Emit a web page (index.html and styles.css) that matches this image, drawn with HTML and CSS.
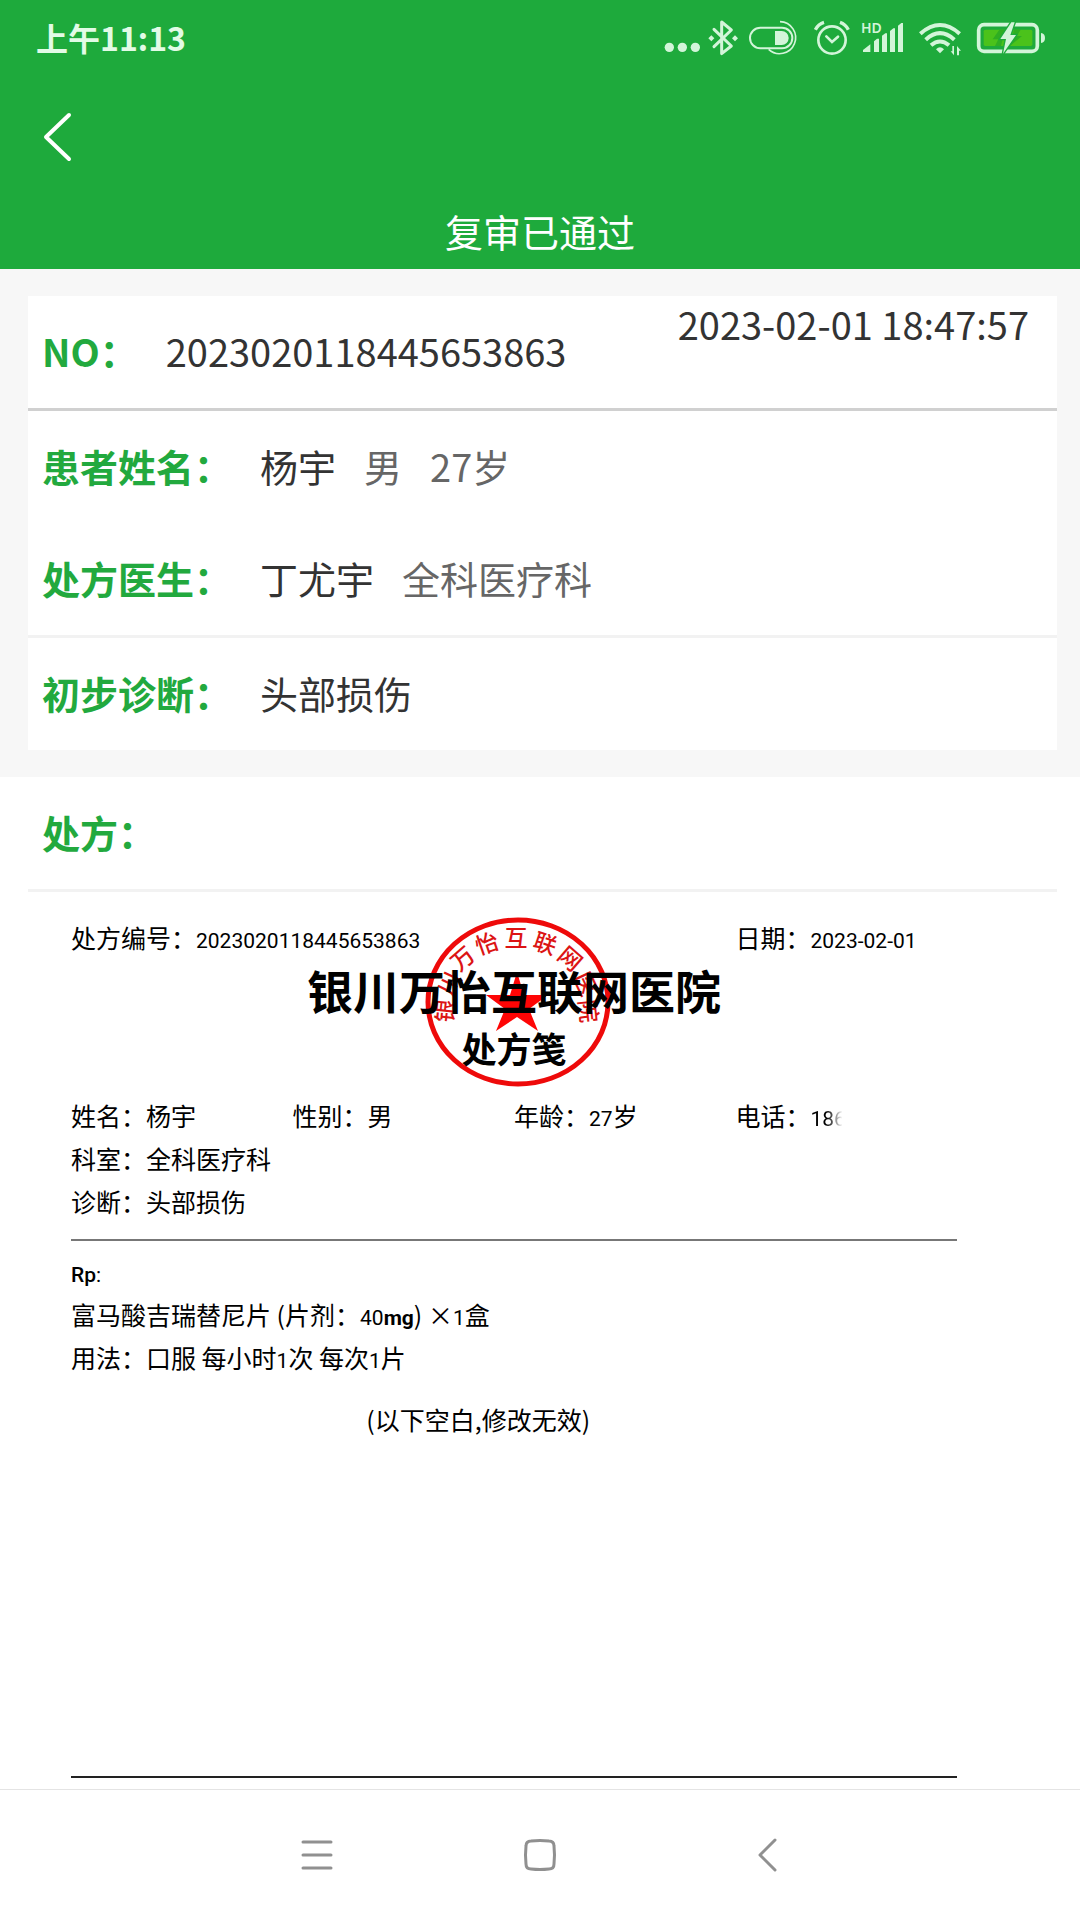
FILE: index.html
```html
<!DOCTYPE html>
<html lang="zh-CN">
<head>
<meta charset="utf-8">
<meta name="viewport" content="width=device-width, initial-scale=1">
<title>复审已通过</title>
<link rel="stylesheet" href="styles.css">
</head>
<body>
<header class="top">
  <div class="status">
    <time class="clock">上午11:13</time>
    <div class="status-icons">
      <svg width="37" height="36" viewBox="72 60 111 108" aria-hidden="true"><g fill="#d3f5d9"><circle cx="88" cy="142" r="14"/><circle cx="127" cy="142" r="14"/><circle cx="166" cy="142" r="14"/></g></svg>
      <svg width="31" height="36" viewBox="204 60 93 108" aria-hidden="true"><path d="M222 88L274 138L245 161V66L274 90L222 140" fill="none" stroke="#d3f5d9" stroke-width="9" stroke-linejoin="round" stroke-linecap="round"/><path d="M214 106l9 9-9 9-9-9zM285 106l9 9-9 9-9-9z" fill="#d3f5d9"/></svg>
      <svg width="53" height="36" viewBox="318 60 159 108" aria-hidden="true"><g fill="none" stroke="#d3f5d9"><rect x="330" y="83" width="127" height="62" rx="31" stroke-width="6"/><path d="M420 65A48 48 0 1 1 386 148" stroke-width="5"/></g><path d="M405 93h20a21 21 0 0 1 0 42h-20z" fill="#d3f5d9"/></svg>
      <svg width="44" height="36" viewBox="498 60 132 108" aria-hidden="true"><g fill="none" stroke="#d3f5d9" stroke-width="8"><circle cx="576" cy="120" r="41"/><path d="M559 109l17 17 18-16" stroke-linecap="round"/><path d="M526 89Q535 72 552 67M600 67Q617 73 625 89" stroke-width="10"/></g></svg>
      <svg width="48" height="36" viewBox="651 60 144 108" aria-hidden="true"><text x="663" y="98" class="hd">HD</text><path d="M669 156v-6l22-17v23zM702 156v-32l9-8h6v40zM726 156v-49l10-7h5v56zM750 156v-63l10-8h5v71zM774 156v-79l10-8h5v87z" fill="#d3f5d9"/></svg>
      <svg width="51" height="36" viewBox="816 60 153 108" aria-hidden="true"><g fill="none" stroke="#d3f5d9" stroke-width="12"><path d="M841 101Q900 49 959 101"/><path d="M857 119Q900 80 943 119"/><path d="M873 136Q900 113 927 136"/></g><path d="M888 148q12-12 24 0l-12 12zM942 138v28l-10-12h5v-16zM951 166v-28l12 14h-6v14z" fill="#d3f5d9"/></svg>
      <svg width="76" height="36" viewBox="990 60 228 108" aria-hidden="true"><rect x="1016" y="74" width="176" height="80" rx="16" fill="none" stroke="#d3f5d9" stroke-width="11"/><path d="M1203 99q12 1 12 15t-12 15z" fill="#d3f5d9"/><rect x="1031" y="89" width="146" height="49" rx="5" fill="#4bc21b"/><path d="M1078 89l-20 29h17l-10 20h18l12-49zM1122 89l-12 49 36-30h-16l12-19z" fill="#2fae22"/><path d="M1114 67l-33 50h17l-9 44 39-56h-17l13-38z" fill="#d3f5d9" stroke="#1eaa3c" stroke-width="8" paint-order="stroke"/></svg>
    </div>
  </div>
  <div class="toolbar">
    <button class="back" type="button" aria-label="返回"><svg width="32" height="52" viewBox="0 0 32 52"><path d="M28 4L5 26L28 48" fill="none" stroke="#fff" stroke-width="4" stroke-linecap="round" stroke-linejoin="round"/></svg></button>
  </div>
  <h1 class="title">复审已通过</h1>
</header>

<main class="main">
  <section class="summary">
    <div class="card">
      <div class="row row-number"><h2 class="label">NO：</h2><span>2023020118445653863</span><time class="stamp">2023-02-01 18:47:57</time></div>
      <div class="row"><h2 class="label">患者姓名：</h2><span>杨宇</span><span class="muted">男</span><span class="muted">27岁</span></div>
      <div class="row"><h2 class="label">处方医生：</h2><span>丁尤宇</span><span class="muted">全科医疗科</span></div>
      <div class="row row-ruled"><h2 class="label">初步诊断：</h2><span>头部损伤</span></div>
    </div>
  </section>

  <section class="prescription">
    <div class="row row-heading"><h2 class="label">处方：</h2></div>
    <article class="sheet">
      <svg class="seal" width="186" height="170" viewBox="0 0 186 170" aria-hidden="true">
        <ellipse cx="93" cy="85" rx="90" ry="82" fill="none" stroke="#ee0a0a" stroke-width="5"/>
        <path d="M92 55L99 78H123L104 92L113 114L92 100L71 114L80 92L61 78H85Z" fill="#fe0505"/>
        <g class="seal-text">
          <text transform="translate(21 94) rotate(-84)" y="8">银</text>
          <text transform="translate(25 67) rotate(-65)" y="8">川</text>
          <text transform="translate(38 42) rotate(-41)" y="8">万</text>
          <text transform="translate(62 27) rotate(-19)" y="8">怡</text>
          <text transform="translate(91 21)" y="8">互</text>
          <text transform="translate(120 27) rotate(19)" y="8">联</text>
          <text transform="translate(145 42) rotate(41)" y="8">网</text>
          <text transform="translate(160 67) rotate(65)" y="8">医</text>
          <text transform="translate(163 94) rotate(84)" y="8">院</text>
        </g>
      </svg>
      <div class="grid"><p class="wide">处方编号：<span class="num">2023020118445653863</span></p><p>日期：<span class="num">2023-02-01</span></p></div>
      <h3 class="hospital">银川万怡互联网医院</h3>
      <h4 class="kind">处方笺</h4>
      <div class="grid"><p>姓名：杨宇</p><p>性别：男</p><p>年龄：<span class="num">27</span>岁</p><p>电话：<span class="num faded">186</span></p></div>
      <p>科室：全科医疗科</p>
      <p>诊断：头部损伤</p>
      <hr class="rule">
      <p><span class="num strong">Rp</span><span class="num">:</span></p>
      <p>富马酸吉瑞替尼片 (片剂：<span class="num">40<b>mg</b></span>) ×<span class="num">1</span>盒</p>
      <p>用法：口服 每小时<span class="num">1</span>次 每次<span class="num">1</span>片</p>
      <p class="blank">(以下空白,修改无效)</p>
      <hr class="rule rule-end">
    </article>
  </section>
</main>

<nav class="system-nav" aria-label="系统导航">
  <button type="button" aria-label="最近任务"><svg width="40" height="40" viewBox="0 0 40 40"><path d="M6 7H34M6 20H34M6 33H34" stroke="#909090" stroke-width="3" stroke-linecap="round"/></svg></button>
  <button type="button" aria-label="主屏幕"><svg width="40" height="40" viewBox="0 0 40 40"><path d="M11 6Q20 5 29 6Q34 6 34 11Q35 20 34 29Q34 34 29 34Q20 35 11 34Q6 34 6 29Q5 20 6 11Q6 6 11 6Z" fill="none" stroke="#909090" stroke-width="3"/></svg></button>
  <button type="button" aria-label="返回"><svg width="40" height="40" viewBox="0 0 40 40"><path d="M32 5L17 20L32 35" fill="none" stroke="#909090" stroke-width="3" stroke-linecap="round" stroke-linejoin="round"/></svg></button>
</nav>
</body>
</html>
```
FILE: styles.css
```css
* { box-sizing: border-box; }

body {
  margin: 0;
  min-height: 100vh;
  display: flex;
  flex-direction: column;
  background: #fff;
  color: #333;
  font-family: "Noto Sans CJK SC", sans-serif;
  font-size: 38px;
  line-height: 56px;
}

h1, h2, h3, h4, p { margin: 0; }

button {
  display: flex;
  align-items: center;
  justify-content: center;
  padding: 0;
  border: 0;
  background: none;
}

svg { display: block; }

/* Header */
.top { background: #1eaa3c; color: #fff; }

.status {
  display: flex;
  align-items: center;
  justify-content: space-between;
  height: 76px;
  padding: 0 34px 0 36px;
}

.clock {
  padding-bottom: 2px;
  color: #e2fbe6;
  font-size: 32px;
  font-weight: 700;
}

.status-icons { display: flex; gap: 7px; }

.status-icons svg { overflow: visible; }

.hd {
  fill: #d3f5d9;
  font-family: "Noto Sans", sans-serif;
  font-size: 42px;
  font-weight: 600;
}

.toolbar {
  display: flex;
  align-items: center;
  height: 121px;
  padding-left: 41px;
}

.title {
  padding-bottom: 4px;
  font-size: 38px;
  font-weight: 400;
  line-height: 68px;
  text-align: center;
}

/* Summary card */
.main {
  flex: 1;
  display: flex;
  flex-direction: column;
}

.summary {
  padding: 27px 23px 27px 28px;
  background: #f7f7f7;
}

.card { background: #fff; }

.row {
  display: flex;
  align-items: center;
  gap: 28px;
  min-height: 112px;
  padding: 0 28px 2px 14px;
}

.row-number,
.row-heading {
  min-height: 115px;
  border-bottom: 3px solid #d0d0d0;
}

.row-ruled {
  min-height: 115px;
  border-top: 3px solid #f2f2f2;
}

.row-heading { border-color: #f2f2f2; }

.label {
  color: #22a93e;
  font-size: 38px;
  font-weight: 700;
}

.muted { color: #666; }

.stamp {
  align-self: flex-start;
  margin-left: auto;
}

/* Prescription */
.prescription {
  flex: 1;
  display: flex;
  flex-direction: column;
  padding: 0 23px 0 28px;
}

.sheet {
  position: relative;
  flex: 1;
  display: flex;
  flex-direction: column;
  padding: 24px 100px 11px 43px;
  color: #000;
  font-size: 25px;
  line-height: 43px;
}

.grid {
  display: grid;
  grid-template-columns: repeat(4, 1fr);
}

.wide { grid-column: span 3; }

.num {
  font-family: Roboto, "Noto Sans CJK SC", sans-serif;
  font-size: 21px;
  line-height: 1;
}

.strong { font-weight: 500; }

.faded {
  -webkit-mask-image: linear-gradient(to right, #000 45%, transparent 90%);
  mask-image: linear-gradient(to right, #000 45%, transparent 90%);
}

.hospital,
.kind {
  position: relative;
  font-weight: 700;
  text-align: center;
}

.hospital { font-size: 46px; line-height: 60px; }

.kind {
  margin-bottom: 17px;
  font-size: 35px;
  line-height: 58px;
}

.seal {
  position: absolute;
  top: 25px;
  left: 397px;
}

.seal-text {
  fill: #dc1414;
  font-size: 23px;
  font-weight: 500;
  text-anchor: middle;
}

.rule {
  width: 100%;
  height: 2px;
  margin: 16px 0 9px;
  border: 0;
  background: #777;
}

.blank {
  margin-top: 19px;
  padding-left: calc(100% / 3);
}

.rule-end {
  margin: auto 0 0;
  background: #222;
}

/* System navigation */
.system-nav {
  display: flex;
  justify-content: center;
  height: 131px;
  border-top: 1px solid #e4e4e4;
}

.system-nav button { flex: 0 1 223px; }
```
